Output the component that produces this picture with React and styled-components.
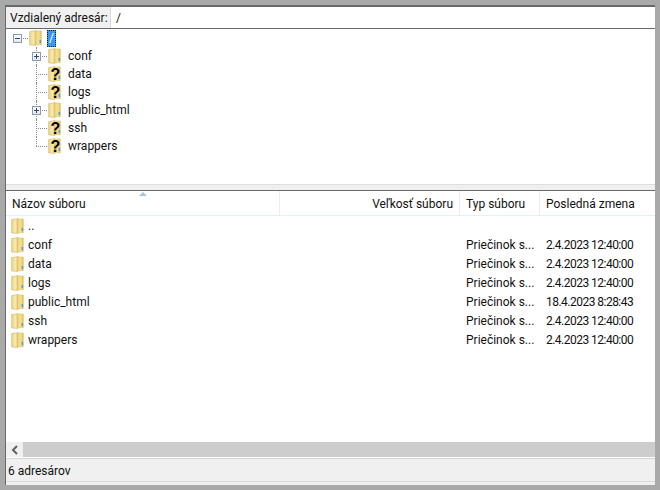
import React from "react";
import styled, { createGlobalStyle } from "styled-components";

const GlobalStyle = createGlobalStyle`
  html, body {
    margin: 0;
    height: 100%;
    background: #a9a9a9;
  }
  body {
    font-family: Roboto, "Open Sans", sans-serif;
    font-size: 12px;
    color: #111;
  }
`;

const Window = styled.div`
  width: 649px;
  height: 478px;
  margin: 5px 0 0 5px;
  border-top: 2px solid #696969;
  border-left: 1px solid #696969;
  background: #fff;
  display: flex;
  flex-direction: column;
  overflow: hidden;
`;

const AddressBar = styled.div`
  height: 22px;
  flex: none;
  box-sizing: border-box;
  display: flex;
  border-bottom: 1px solid #696969;
`;

const AddressLabel = styled.div`
  width: 105px;
  padding-left: 4px;
  box-sizing: border-box;
  background: #f0f0f0;
  border-right: 1px solid #d9d9d9;
  line-height: 22px;
  white-space: nowrap;
`;

const AddressInput = styled.div`
  flex: 1;
  padding-left: 5px;
  line-height: 22px;
`;

const Tree = styled.div`
  height: 155px;
  flex: none;
  padding-left: 6px;
  box-sizing: border-box;
`;

const TreeRow = styled.div`
  height: 18px;
  display: flex;
  align-items: center;
  padding-left: ${(p) => (p.$root ? 0 : 19)}px;
`;

const Connector = styled.span`
  position: relative;
  width: 16px;
  height: 18px;
  flex: none;
  margin-right: 1px;

  &::before {
    content: "";
    position: absolute;
    left: 5px;
    top: 0;
    height: ${(p) => (p.$last ? 9 : 18)}px;
    border-left: 1px dotted #8a8a8a;
    display: ${(p) => (p.$root ? "none" : "block")};
  }

  &::after {
    content: "";
    position: absolute;
    left: 5px;
    right: 0;
    top: 9px;
    border-top: 1px dotted #8a8a8a;
  }
`;

const Expander = styled.span`
  position: absolute;
  z-index: 1;
  left: 1px;
  top: 5px;
  width: 7px;
  height: 7px;
  border: 1px solid #8e99ab;
  background: linear-gradient(#fff, #e3e6ec);

  &::before {
    content: "";
    position: absolute;
    left: 1px;
    top: 3px;
    width: 5px;
    height: 1px;
    background: #2b4a80;
  }

  &::after {
    content: "";
    display: ${(p) => (p.$open ? "none" : "block")};
    position: absolute;
    left: 3px;
    top: 1px;
    width: 1px;
    height: 5px;
    background: #2b4a80;
  }
`;

const TreeLabel = styled.span`
  margin-left: 7px;
  line-height: 18px;
  white-space: nowrap;
`;

const SelectedLabel = styled.span`
  margin-left: 5px;
  width: 9px;
  height: 17px;
  box-sizing: border-box;
  background: #3399ff;
  outline: 1px dotted #1a1a1a;
  outline-offset: -1px;
  color: #fff;
  line-height: 16px;
  text-align: center;
`;

const Splitter = styled.div`
  height: 7px;
  flex: none;
  box-sizing: border-box;
  background: #f0f0f0;
  border-top: 1px solid #dedede;
  border-bottom: 1px solid #696969;
`;

const ListArea = styled.div`
  flex: 1;
  display: flex;
  flex-direction: column;
  min-height: 0;
  position: relative;
`;

const columns = "274px 180px 80px 115px";

const Header = styled.div`
  height: 25px;
  flex: none;
  display: grid;
  grid-template-columns: ${columns};
  box-sizing: border-box;
  border-bottom: 1px solid #e6eef7;
`;

const HeaderCell = styled.div`
  padding: 0 6px;
  line-height: 26px;
  text-align: ${(p) => (p.$right ? "right" : "left")};
  border-right: 1px solid #e6eef7;
  white-space: nowrap;
  overflow: hidden;

  &:last-child {
    border-right: 0;
  }
`;

const SortArrow = styled.span`
  position: absolute;
  left: 133px;
  top: 1px;
  width: 0;
  height: 0;
  border-left: 4px solid transparent;
  border-right: 4px solid transparent;
  border-bottom: 4px solid #a8c4dc;
`;

const Rows = styled.div`
  flex: 1;
`;

const FileRow = styled.div`
  height: 19px;
  display: grid;
  grid-template-columns: ${columns};
  align-items: center;
  white-space: nowrap;
`;

const RowText = styled.span`
  padding-top: 1px;
  line-height: 18px;
`;

const NameCell = styled.div`
  display: flex;
  align-items: center;
  gap: 4px;
  padding-left: 5px;
`;

const Cell = styled.div`
  padding: 1px 0 0 6px;
  line-height: 18px;
  overflow: hidden;
  letter-spacing: ${(p) => (p.$tight ? "-0.52px" : "0")};
`;

const Scrollbar = styled.div`
  height: 15px;
  flex: none;
  background: #cdcdcd;
  display: flex;
`;

const ScrollButton = styled.div`
  width: 17px;
  background: #f0f0f0;
  display: flex;
  align-items: center;
  justify-content: center;
`;

const StatusBar = styled.div`
  height: 28px;
  flex: none;
  box-sizing: border-box;
  background: #f0f0f0;
  border-top: 1px solid #fff;
  position: relative;
  padding-left: 2px;
  line-height: 26px;

  &::before {
    content: "";
    position: absolute;
    left: 0;
    right: 0;
    top: 0;
    border-top: 1px solid #d5d5d5;
  }

  &::after {
    content: "";
    position: absolute;
    left: 0;
    right: 0;
    bottom: 3px;
    border-top: 1px solid #d9d9d9;
  }
`;

const FolderSvg = styled.svg`
  flex: none;
  display: block;
`;

function FolderIcon({ unknown }) {
  return (
    <FolderSvg width="13" height="16" viewBox="0 0 13 16">
      <defs>
        <linearGradient id="leftPanel" x1="0" y1="0" x2="1" y2="0">
          <stop offset="0" stopColor="#e9d27f" />
          <stop offset="0.6" stopColor="#f7ebb0" />
          <stop offset="1" stopColor="#e2c464" />
        </linearGradient>
        <linearGradient id="rightPanel" x1="0" y1="0" x2="1" y2="0">
          <stop offset="0" stopColor="#f5e49b" />
          <stop offset="0.7" stopColor="#f2d985" />
          <stop offset="1" stopColor="#d8bb5e" />
        </linearGradient>
      </defs>
      <path d="M6 1h6.3v13.7H6z" fill="url(#rightPanel)" stroke="#dcc273" strokeWidth="0.6" />
      <path d="M.6 1.6 7 .6v14.8l-6.4-.5z" fill="url(#leftPanel)" stroke="#d6bb68" strokeWidth="0.6" />
      <rect x="10.6" y="10" width="1.5" height="3" fill="#4f9fe0" />
      {unknown && (
        <text
          x="7.5"
          y="14"
          textAnchor="middle"
          fontFamily="Liberation Sans, sans-serif"
          fontWeight="700"
          fontSize="16"
          fill="#000"
        >
          ?
        </text>
      )}
    </FolderSvg>
  );
}

const treeItems = [
  { name: "conf", expand: true },
  { name: "data", unknown: true },
  { name: "logs", unknown: true },
  { name: "public_html", expand: true },
  { name: "ssh", unknown: true },
  { name: "wrappers", unknown: true, last: true },
];

const files = [
  { name: "..", type: "", date: "" },
  { name: "conf", type: "Priečinok s...", date: "2.4.2023 12:40:00" },
  { name: "data", type: "Priečinok s...", date: "2.4.2023 12:40:00" },
  { name: "logs", type: "Priečinok s...", date: "2.4.2023 12:40:00" },
  { name: "public_html", type: "Priečinok s...", date: "18.4.2023 8:28:43" },
  { name: "ssh", type: "Priečinok s...", date: "2.4.2023 12:40:00" },
  { name: "wrappers", type: "Priečinok s...", date: "2.4.2023 12:40:00" },
];

function App() {
  return (
    <>
      <GlobalStyle />
      <Window>
        <AddressBar>
          <AddressLabel>Vzdialený adresár:</AddressLabel>
          <AddressInput>/</AddressInput>
        </AddressBar>
        <Tree>
          <TreeRow $root>
            <Connector $root>
              <Expander $open />
            </Connector>
            <FolderIcon />
            <SelectedLabel>/</SelectedLabel>
          </TreeRow>
          {treeItems.map((item) => (
            <TreeRow key={item.name}>
              <Connector $last={item.last}>
                {item.expand && <Expander />}
              </Connector>
              <FolderIcon unknown={item.unknown} />
              <TreeLabel>{item.name}</TreeLabel>
            </TreeRow>
          ))}
        </Tree>
        <Splitter />
        <ListArea>
          <SortArrow />
          <Header>
            <HeaderCell>Názov súboru</HeaderCell>
            <HeaderCell $right>Veľkosť súboru</HeaderCell>
            <HeaderCell>Typ súboru</HeaderCell>
            <HeaderCell>Posledná zmena</HeaderCell>
          </Header>
          <Rows>
            {files.map((file) => (
              <FileRow key={file.name}>
                <NameCell>
                  <FolderIcon />
                  <RowText>{file.name}</RowText>
                </NameCell>
                <span />
                <Cell>{file.type}</Cell>
                <Cell $tight>{file.date}</Cell>
              </FileRow>
            ))}
          </Rows>
          <Scrollbar>
            <ScrollButton>
              <svg width="8" height="10" viewBox="0 0 8 10">
                <path d="M6 1 2 5l4 4" fill="none" stroke="#606060" strokeWidth="2" />
              </svg>
            </ScrollButton>
          </Scrollbar>
          <StatusBar>6 adresárov</StatusBar>
        </ListArea>
      </Window>
    </>
  );
}

export default App;
